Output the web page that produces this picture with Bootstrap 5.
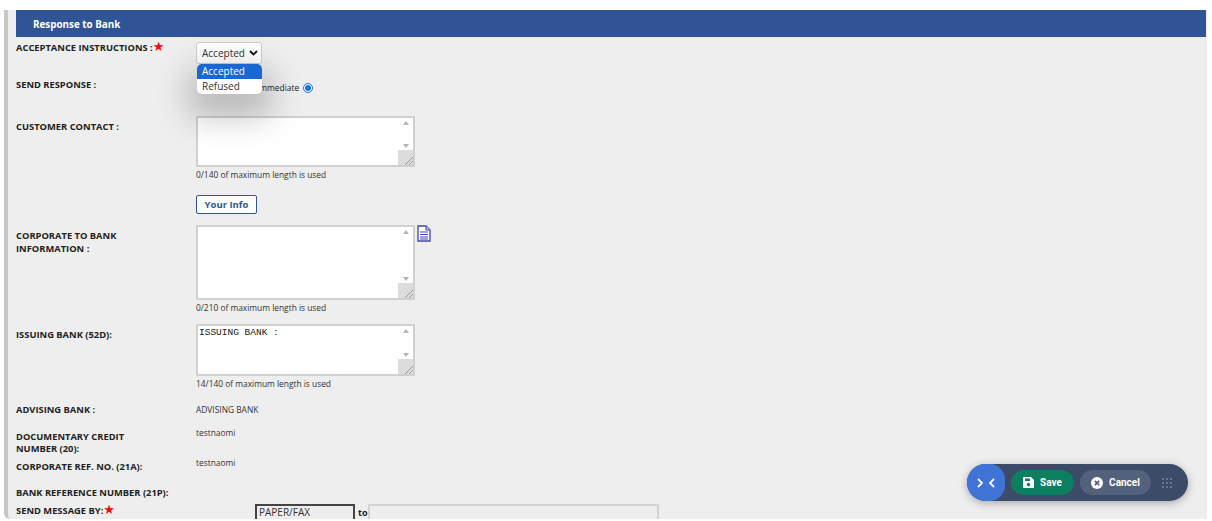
<!DOCTYPE html>
<html lang="en"><head><meta charset="utf-8">
<title>Response to Bank</title>
<link href="https://cdn.jsdelivr.net/npm/bootstrap@5.3.0/dist/css/bootstrap.min.css" rel="stylesheet">
<style>
html,body{height:521px;overflow:hidden;background:#fff}
body{font-family:"Open Sans","Noto Sans",sans-serif;color:#222}
.shell{margin:10px 5px 0 4px;height:509px;background:#eee;border-left:4px solid #c6c6c6;border-bottom-left-radius:6px;padding-left:8px;overflow:hidden;position:relative}
.sect-head{height:27px;background:#2f5597;color:#fff;font-size:9.850px;font-weight:700;line-height:28px;padding-left:17px;margin-right:1px}
.frow{display:flex;align-items:flex-start}
.flabel{width:180px;flex:none;font-size:9.350px;font-weight:700;line-height:12.500px;color:#222}
.fval{font-size:8.400px;line-height:12px;color:#333}
.req{color:#f00;font-family:"DejaVu Sans",sans-serif;font-size:13px;font-weight:400;line-height:10px;vertical-align:0}
.sel-box{width:66px;height:22px;background:#fff;border:1px solid #ccc;border-radius:3px;font-size:10px;color:#333;display:flex;align-items:center;justify-content:space-between;padding:0 3px 0 5px}
.drop{position:absolute;left:189px;top:54px;width:65px;height:30px;background:#fff;border-radius:5px;box-shadow:0 14px 32px 10px rgba(0,0,0,.22);font-size:10px;line-height:15px;overflow:hidden;color:#333;z-index:3}
.drop div{padding-left:5px}
.drop .on{background:#1a66d2;color:#fff}
.imm{font-size:8.400px;padding-left:61px;display:flex;align-items:center;gap:4px;line-height:12px}
.radio-dot{width:10px;height:10px;border-radius:50%;border:1.5px solid #1a73e8;display:flex;align-items:center;justify-content:center;background:#fff}
.radio-dot::after{content:"";width:6px;height:6px;border-radius:50%;background:#1a73e8}
.ta{display:block;width:219px;background:#fff;border:2px solid #d0d0d0;border-radius:1px;padding:1px 0 0 1px;font-family:"Liberation Mono",monospace;font-size:9.500px;line-height:12px;color:#222;overflow-y:scroll;resize:both;outline:0}
.ta::-webkit-scrollbar{width:13px}
.ta::-webkit-scrollbar-track{background:#f4f4f4}
.ta::-webkit-scrollbar-corner{background:#dcdcdc}
.ta::-webkit-resizer{background:linear-gradient(135deg,#dcdcdc 72%,#999 72%,#999 76%,#dcdcdc 76%,#dcdcdc 85%,#999 85%,#999 89%,#dcdcdc 89%)}
.arrows{position:relative}
.arrows::before,.arrows::after{content:"";position:absolute;left:207px;border-left:3.500px solid transparent;border-right:3.500px solid transparent}
.arrows::before{top:5px;border-bottom:4px solid #b5b5b5}
.arrows::after{bottom:19px;border-top:4px solid #b5b5b5}
.hint{font-size:8.400px;line-height:12px;color:#333;margin-top:2px}
.info-btn{display:block;width:61px;height:19px;padding:0;background:#fff;border:1px solid #2f5597;border-radius:2px;color:#2f5597;font-size:9.500px;font-weight:700;line-height:17px;text-align:center}
.paper{width:100px;height:20px;margin-top:-1px;border:2px solid #444;border-bottom:0;font-size:10px;line-height:13px;padding:0 2px;color:#333;background:#eee}
.to-word{font-size:9px;font-weight:700;line-height:11px;margin:2px 1px 0 3px}
.dest{width:291px;height:20px;margin-top:-1px;border:2px solid #d2d2d2;border-bottom:0;border-radius:2px 2px 0 0;background:#eee}
.dock{position:absolute;left:959px;top:454px;width:221px;height:37px;border-radius:19px;background:#3c4b68;box-shadow:0 2px 8px rgba(0,0,0,.3);z-index:4;display:flex;align-items:center}
.dock-tog{width:38px;height:37px;flex:none;background:#3f74d6;border-radius:19px 16px 16px 19px;display:flex;align-items:center;justify-content:center;margin-right:6px}
.dock-btn{height:25px;border-radius:13px;border:0;padding:0;color:#fff;font-family:"Roboto",sans-serif;font-size:10px;font-weight:700;display:flex;align-items:center;justify-content:center;gap:6px}
.dock-save{width:63px;background:#0b7f5f;margin-right:6px}
.dock-cancel{width:71px;background:#53617c;margin-right:11px}
</style></head>
<body>
<div class="shell">
  <div class="sect-head">Response to Bank</div>

  <div class="frow" style="margin-top:5px">
    <div class="flabel">ACCEPTANCE INSTRUCTIONS :<span class="req">★</span></div>
    <div class="sel-box"><span>Accepted</span>
      <svg width="9" height="6" viewBox="0 0 9 6"><path d="M1 1l3.500 3.500L8 1" fill="none" stroke="#111" stroke-width="1.800"/></svg>
    </div>
  </div>
  <div class="drop"><div class="on">Accepted</div><div>Refused</div></div>

  <div class="frow" style="margin-top:15px">
    <div class="flabel">SEND RESPONSE :</div>
    <div class="imm" style="margin-top:3px"><span>Immediate</span><span class="radio-dot"></span></div>
  </div>

  <div class="frow" style="margin-top:22px">
    <div class="flabel" style="margin-top:5px">CUSTOMER CONTACT :</div>
    <div>
      <div class="arrows"><textarea class="ta" style="height:51px" aria-label="Customer contact"></textarea></div>
      <div class="hint">0/140 of maximum length is used</div>
      <button type="button" class="info-btn" style="margin-top:14px">Your Info</button>
    </div>
  </div>

  <div class="frow" style="margin-top:11px">
    <div class="flabel" style="margin-top:5px">CORPORATE TO BANK<br>INFORMATION :</div>
    <div>
      <div class="d-flex align-items-start">
        <div class="arrows"><textarea class="ta" style="height:75px" aria-label="Corporate to bank information"></textarea></div>
        <svg width="14" height="17" viewBox="0 0 14 17" style="margin-left:2px"><path d="M1 1h8l4 4v11H1z" fill="#fff" stroke="#3f48a8" stroke-width="1.300"/><path d="M9 1v4h4" fill="#c5c8ea" stroke="#3f48a8"/><path d="M3 7h8M3 9.500h8M3 12h8M3 14h8" stroke="#3f48a8"/></svg>
      </div>
      <div class="hint">0/210 of maximum length is used</div>
    </div>
  </div>

  <div class="frow" style="margin-top:10px">
    <div class="flabel" style="margin-top:5px">ISSUING BANK (52D):</div>
    <div>
      <div class="arrows"><textarea class="ta" style="height:52px" aria-label="Issuing bank">ISSUING BANK :</textarea></div>
      <div class="hint">14/140 of maximum length is used</div>
    </div>
  </div>

  <div class="frow" style="margin-top:13px">
    <div class="flabel" style="margin-top:1px">ADVISING BANK :</div>
    <div class="fval" style="margin-top:1px">ADVISING BANK</div>
  </div>

  <div class="frow" style="margin-top:10px">
    <div class="flabel" style="padding-right:50px;margin-top:4px">DOCUMENTARY CREDIT NUMBER (20):</div>
    <div class="fval">testnaomi</div>
  </div>

  <div class="frow" style="margin-top:1px">
    <div class="flabel" style="margin-top:4px">CORPORATE REF. NO. (21A):</div>
    <div class="fval">testnaomi</div>
  </div>

  <div class="frow" style="margin-top:14px">
    <div class="flabel">BANK REFERENCE NUMBER (21P):</div>
  </div>

  <div class="frow" style="margin-top:5px">
    <div class="flabel" style="width:239px">SEND MESSAGE BY:<span class="req">★</span></div>
    <div class="paper">PAPER/FAX</div>
    <div class="to-word">to</div>
    <div class="dest"></div>
  </div>

  <div class="dock">
    <div class="dock-tog"><svg width="20" height="10" viewBox="0 0 20 10"><path d="M2 1l4 4-4 4M18 1l-4 4 4 4" fill="none" stroke="#fff" stroke-width="1.800"/></svg></div>
    <button type="button" class="dock-btn dock-save">
      <svg width="11" height="11" viewBox="0 0 11 11"><path d="M1 0h7l3 3v7a1 1 0 0 1-1 1H1a1 1 0 0 1-1-1V1a1 1 0 0 1 1-1z" fill="#fff"/><rect x="2" y="1.500" width="5" height="2.500" fill="#0b7f5f"/><circle cx="5.500" cy="7.500" r="1.700" fill="#0b7f5f"/></svg>
      Save</button>
    <button type="button" class="dock-btn dock-cancel">
      <svg width="12" height="12" viewBox="0 0 12 12"><circle cx="6" cy="6" r="6" fill="#fff"/><path d="M3.800 3.800l4.400 4.400M8.200 3.800L3.800 8.200" stroke="#53617c" stroke-width="1.700"/></svg>
      Cancel</button>
    <svg width="10" height="10" viewBox="0 0 10 10" fill="#7f8aa1"><circle cx="1" cy="1" r=".9"/><circle cx="5" cy="1" r=".9"/><circle cx="9" cy="1" r=".9"/><circle cx="1" cy="5" r=".9"/><circle cx="5" cy="5" r=".9"/><circle cx="9" cy="5" r=".9"/><circle cx="1" cy="9" r=".9"/><circle cx="5" cy="9" r=".9"/><circle cx="9" cy="9" r=".9"/></svg>
  </div>
</div>
<script src="https://cdn.jsdelivr.net/npm/bootstrap@5.3.0/dist/js/bootstrap.bundle.min.js"></script>
</body></html>
